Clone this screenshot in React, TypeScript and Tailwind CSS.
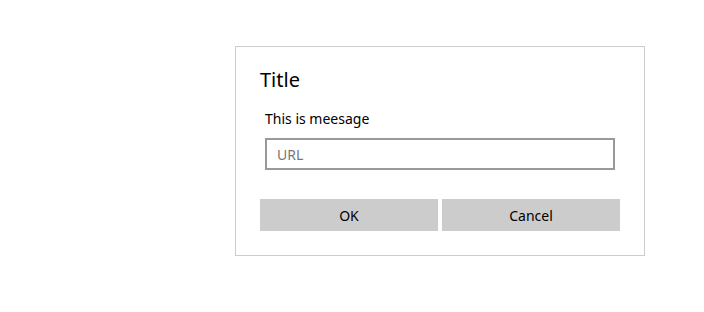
import React from "react";

export default function App() {
  return (
    <div
      className="w-[704px] h-[312px] bg-white pt-[46px] pl-[235px]"
      style={{ fontFamily: '"Noto Sans", "Open Sans", sans-serif' }}
    >
      <div className="w-[410px] h-[210px] border border-[#cccccc] bg-white px-6 pt-[19px] flex flex-col">
        <div className="text-[20px] leading-[28px] text-black">Title</div>
        <div className="px-[5px] mt-[15px] w-[360px]">
          <div className="text-[14px] leading-[20px] text-black">This is meesage</div>
          <input
            placeholder="URL"
            className="mt-[9px] w-[350px] h-[32px] border-2 border-[#999999] px-[10px] text-[14px] outline-none placeholder:text-[#777777]"
          />
        </div>
        <div className="mt-[29px] flex gap-[4px]">
          <button className="w-[178px] h-[32px] bg-[#cccccc] text-[14px] text-black">OK</button>
          <button className="w-[178px] h-[32px] bg-[#cccccc] text-[14px] text-black">Cancel</button>
        </div>
      </div>
    </div>
  );
}
